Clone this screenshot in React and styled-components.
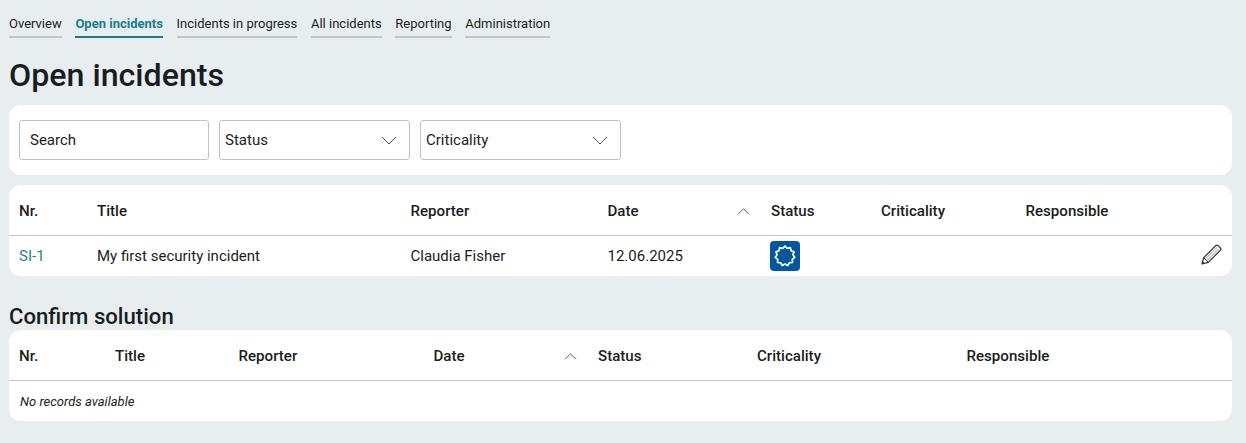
import React from "react";
import styled, { createGlobalStyle } from "styled-components";

const GlobalStyle = createGlobalStyle`
  html, body {
    margin: 0;
    padding: 0;
    background: #e8edf0;
  }
  body {
    font-family: Roboto, "Liberation Sans", sans-serif;
    color: #1a1d20;
  }
`;

const tabs = [
  "Overview",
  "Open incidents",
  "Incidents in progress",
  "All incidents",
  "Reporting",
  "Administration",
];

const openColumns = "78px 313.5px 197px 163.5px 110px 144.5px 1fr";
const confirmColumns = "96px 123.5px 195px 164.5px 159px 209.5px 1fr";
const headers = ["Nr.", "Title", "Reporter", "Date", "Status", "Criticality", "Responsible"];

// scalloped ring of the status badge
const lobes = 11;
const ringPoints = Array.from({ length: lobes * 2 }, (_, i) => {
  const r = i % 2 === 0 ? 9.9 : 8;
  const a = (Math.PI * i) / lobes;
  return `${(12 + r * Math.sin(a)).toFixed(2)},${(12 - r * Math.cos(a)).toFixed(2)}`;
}).join(" ");

const Chevron = ({ up }) => (
  <ChevronSvg viewBox="0 0 16 9" $up={up}>
    <path d="M1 1l7 7 7-7" fill="none" stroke="#4d5457" strokeWidth={up ? 1.2 : 1} />
  </ChevronSvg>
);

const HeaderRow = ({ columns }) => (
  <Row $columns={columns} $head>
    {headers.map((h) => (
      <HeadCell key={h}>
        {h}
        {h === "Date" && <Chevron up />}
      </HeadCell>
    ))}
  </Row>
);

const App = () => {
  return (
    <>
      <GlobalStyle />
      <Page>
        <TabBar>
          {tabs.map((t) => (
            <Tab key={t} $active={t === "Open incidents"}>
              {t}
            </Tab>
          ))}
        </TabBar>
        <Title>Open incidents</Title>
        <FilterPanel>
          <SearchBox>Search</SearchBox>
          <SelectBox $width={191}>
            Status
            <Chevron />
          </SelectBox>
          <SelectBox $width={201}>
            Criticality
            <Chevron />
          </SelectBox>
        </FilterPanel>
        <Panel>
          <HeaderRow columns={openColumns} />
          <Row $columns={openColumns}>
            <Cell>
              <IncidentLink>SI-1</IncidentLink>
            </Cell>
            <Cell>My first security incident</Cell>
            <Cell>Claudia Fisher</Cell>
            <Cell>12.06.2025</Cell>
            <Cell>
              <StatusBadge>
                <svg viewBox="0 0 24 24" width="24" height="24">
                  <polygon
                    points={ringPoints}
                    fill="none"
                    stroke="#fff"
                    strokeWidth="1.7"
                    strokeLinejoin="round"
                  />
                </svg>
              </StatusBadge>
            </Cell>
            <Cell />
            <ActionCell>
              <svg viewBox="0 0 22 22" width="22" height="22">
                <path
                  d="M2 20l1.7-6.3L15.7 1.7c.8-.8 1.7-.8 2.5 0l2.1 2.1c.8.8.8 1.7 0 2.5L8.3 18.3z"
                  fill="#fff"
                  stroke="#2b2f31"
                  strokeWidth="1.2"
                  strokeLinejoin="round"
                />
                <path d="M5.2 15.2L17 3.4M6.8 16.8L18.6 5" fill="none" stroke="#8b9092" strokeWidth="1" />
                <path d="M3.7 13.7l4.6 4.6" fill="none" stroke="#2b2f31" strokeWidth="1" />
                <path d="M2 20l.7-2.7 2 2z" fill="#2b2f31" />
              </svg>
            </ActionCell>
          </Row>
        </Panel>
        <SectionTitle>Confirm solution</SectionTitle>
        <Panel>
          <HeaderRow columns={confirmColumns} />
          <EmptyRow>No records available</EmptyRow>
        </Panel>
      </Page>
    </>
  );
};

const Page = styled.div`
  padding: 14px 14px 22px 9px;
  box-sizing: border-box;
  width: 1246px;
  height: 443px;
  overflow: hidden;
`;

const TabBar = styled.div`
  display: flex;
  gap: 13.7px;
`;

const Tab = styled.div`
  font-size: 13px;
  line-height: 20px;
  padding-bottom: 2px;
  font-weight: ${(p) => (p.$active ? 700 : 400)};
  color: ${(p) => (p.$active ? "#167f8e" : "#1a1d20")};
  border-bottom: 2px solid ${(p) => (p.$active ? "#167f8e" : "#bfc6c9")};
`;

const Title = styled.h1`
  margin: 17px 0 10px;
  font-size: 32.2px;
  line-height: 40px;
  font-weight: 500;
`;

const Panel = styled.div`
  background: #fff;
  border-radius: 12px;
  overflow: hidden;
`;

const FilterPanel = styled(Panel)`
  display: flex;
  gap: 10px;
  padding: 15px 10px;
  margin-bottom: 10px;
`;

const SearchBox = styled.div`
  width: 190px;
  height: 40px;
  box-sizing: border-box;
  border: 1px solid #bfc6c9;
  border-radius: 3px;
  padding: 0 10px;
  font-size: 15px;
  line-height: 38px;
`;

const SelectBox = styled.div`
  width: ${(p) => p.$width}px;
  height: 40px;
  box-sizing: border-box;
  border: 1px solid #bfc6c9;
  border-radius: 3px;
  padding: 0 12.5px 0 5px;
  font-size: 15px;
  display: flex;
  align-items: center;
  justify-content: space-between;
`;

const ChevronSvg = styled.svg`
  width: ${(p) => (p.$up ? "13px" : "16px")};
  height: ${(p) => (p.$up ? "7px" : "9px")};
  margin-right: ${(p) => (p.$up ? "1px" : "0")};
  transform: ${(p) => (p.$up ? "rotate(180deg)" : "none")};
`;

const Row = styled.div`
  display: grid;
  grid-template-columns: ${(p) => p.$columns};
  align-items: center;
  height: ${(p) => (p.$head ? "51px" : "40px")};
  padding-top: ${(p) => (p.$head ? "2px" : "0")};
  box-sizing: border-box;
  border-bottom: ${(p) => (p.$head ? "1px solid #bfc8c9" : "none")};
`;

const Cell = styled.div`
  padding: 0 10px;
  font-size: 15px;
  display: flex;
  align-items: center;
`;

const HeadCell = styled(Cell)`
  font-weight: 500;
  font-size: 15.1px;
  justify-content: space-between;
`;

const IncidentLink = styled.span`
  color: #1d8496;
`;

const StatusBadge = styled.span`
  width: 30px;
  height: 30px;
  background: #02589c;
  border-radius: 4px;
  display: flex;
  align-items: center;
  justify-content: center;
  margin-left: -1px;
`;

const ActionCell = styled(Cell)`
  justify-content: flex-end;
  padding-bottom: 3px;
`;

const SectionTitle = styled.h2`
  margin: 27px 0 1px;
  font-size: 22.15px;
  line-height: 26px;
  font-weight: 500;
`;

const EmptyRow = styled.div`
  padding: 0 10px 0 11px;
  height: 40px;
  line-height: 41px;
  font-size: 13px;
  font-style: italic;
`;

export default App;
